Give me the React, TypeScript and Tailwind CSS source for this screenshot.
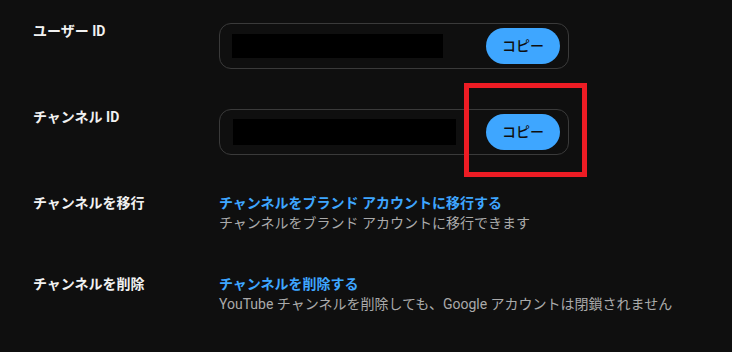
import React from "react";

const font = { fontFamily: '"Roboto", "Noto Sans CJK JP", sans-serif' };

function IdRow({ label, redactW, redactH, redactMl, mt }: { label: string; redactW: string; redactH: string; redactMl: string; mt: string }) {
  return (
    <div className={`flex items-start ${mt}`}>
      <div className="w-[186px] shrink-0 text-[14px] leading-[20px] font-bold text-[#f1f1f1]">{label}</div>
      <div className="mt-[2px] flex h-[46px] w-[350px] items-center justify-between rounded-[12px] border border-[#3a3a3a] pr-[8px]">
        <div className={`${redactW} ${redactH} ${redactMl} bg-black`} />
        <button className="flex h-[36px] w-[74px] items-center justify-center rounded-full bg-[#3ea6ff] text-[14px] font-medium text-[#0f0f0f]">
          コピー
        </button>
      </div>
    </div>
  );
}

function LinkRow({ label, link, desc, mt }: { label: string; link: string; desc: string; mt: string }) {
  return (
    <div className={`flex items-start ${mt}`}>
      <div className="w-[186px] shrink-0 text-[14px] leading-[20px] font-bold text-[#f1f1f1]">{label}</div>
      <div className="flex flex-col">
        <a className="text-[14px] leading-[20px] font-bold text-[#3ea6ff]">{link}</a>
        <div className="text-[14px] leading-[20px] text-[#aaaaaa]">{desc}</div>
      </div>
    </div>
  );
}

export default function App() {
  return (
    <div className="relative min-h-[352px] w-[732px] bg-[#0f0f0f] pl-[33px] pt-[21px]" style={font}>
      <IdRow label="ユーザー ID" redactW="w-[211px]" redactH="h-[24px]" redactMl="ml-[12px]" mt="" />
      <IdRow label="チャンネル ID" redactW="w-[223px]" redactH="h-[26px]" redactMl="ml-[13px]" mt="mt-[38px]" />
      <LinkRow
        label="チャンネルを移行"
        link="チャンネルをブランド アカウントに移行する"
        desc="チャンネルをブランド アカウントに移行できます"
        mt="mt-[38px]"
      />
      <LinkRow
        label="チャンネルを削除"
        link="チャンネルを削除する"
        desc="YouTube チャンネルを削除しても、Google アカウントは閉鎖されません"
        mt="mt-[41px]"
      />
      <div className="pointer-events-none absolute left-[464px] top-[83px] h-[94px] w-[123px] border-[5px] border-[#ed1c24]" />
    </div>
  );
}
